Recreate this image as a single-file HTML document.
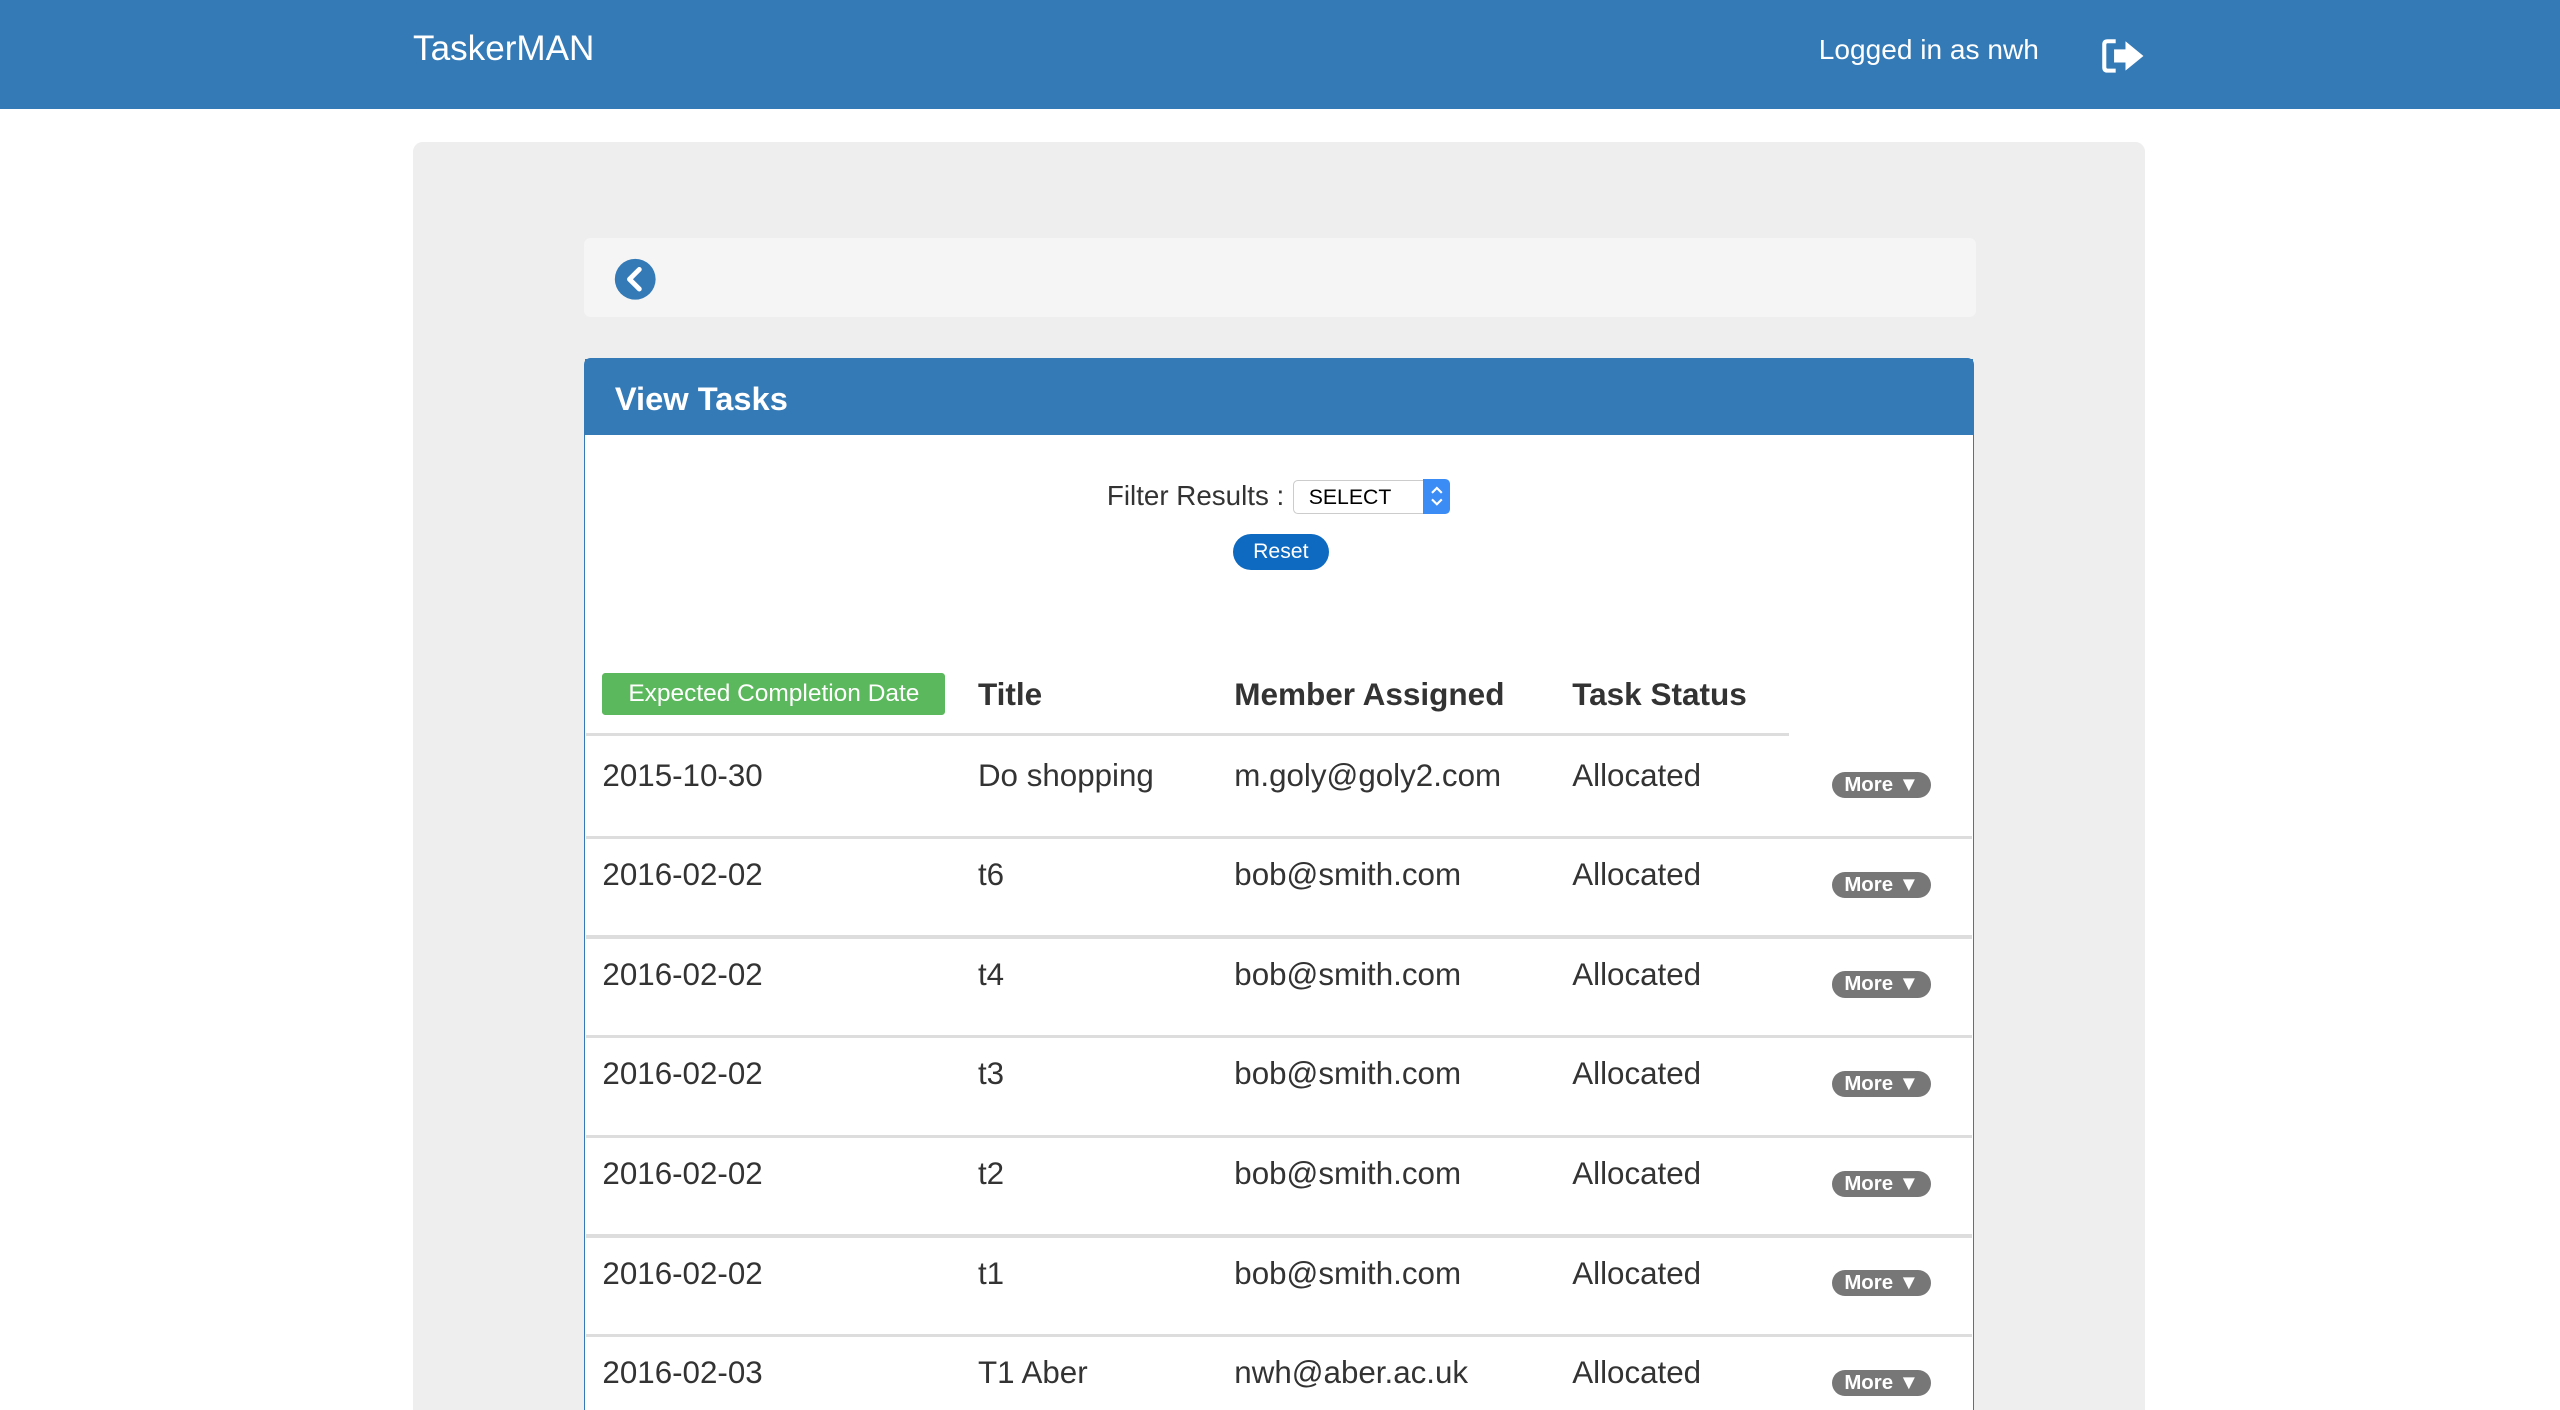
<!DOCTYPE html>
<html><head><meta charset="utf-8">
<style>
html,body{margin:0;padding:0;width:2560px;height:1410px;overflow:hidden;background:#fff}
#z{zoom:1.63265;width:1568px;height:864px;position:relative;overflow:hidden;font-family:"Liberation Sans",Arial,sans-serif;color:#333}
.nav{position:absolute;left:0;top:0;width:1568px;height:67px;background:#337ab7}
.brand{position:absolute;left:253px;top:18px;font-size:21.5px;color:#fff}
.login{position:absolute;left:1114px;top:21px;font-size:17.2px;color:#fff}
.well{position:absolute;left:253px;top:87px;width:1061px;height:777px;background:#eee;border-radius:6px 6px 0 0}
.bc{position:absolute;left:358px;top:146px;width:852px;height:48px;background:#f5f5f5;border-radius:4px}
.panel{position:absolute;left:358px;top:219px;width:850px;height:645px;border:1px solid #337ab7;border-bottom:0;border-radius:4px 4px 0 0;background:#fff}
.ph{position:absolute;left:0;top:0;width:850px;height:47px;background:#337ab7}
.ph span{position:absolute;left:18px;top:13px;font-size:20px;font-weight:bold;color:#fff}
.filter{position:absolute;left:678px;top:294px;font-size:17px}
.sel{position:absolute;left:792px;top:294px;width:96px;height:21px;border:1px solid #ccc;border-radius:3px;background:#fff;box-sizing:border-box}
.sel span{position:absolute;left:9px;top:3px;font-size:13px;color:#000}
.sel i{position:absolute;right:-1px;top:-1px;width:17px;height:21px;background:#3b8cf5;border-radius:0 3px 3px 0}
.reset{position:absolute;left:755px;top:327px;width:59px;height:22px;border-radius:11px;background:#0e6ac0;color:#fff;font-size:13px;text-align:center;line-height:22px}
.lbl{position:absolute;left:369px;top:412px;width:210px;height:26px;background:#5cb85c;border-radius:2px;color:#fff;font-size:15px;text-align:center;line-height:26px}
.th{position:absolute;top:414px;font-size:19.3px;font-weight:bold}
.hline{position:absolute;left:359px;top:449px;width:737px;height:2px;background:#ddd}
.row{position:absolute;left:359px;width:849px;height:61px}
.row .c{position:absolute;top:13px;font-size:19.2px}
.row .sep{position:absolute;left:0;bottom:-2px;width:849px;height:2px;background:#ddd}
.more{position:absolute;left:763px;top:22px;width:61px;height:16px;border-radius:8px;background:#777;color:#fff;font-size:12.5px;font-weight:bold;line-height:16px;text-align:center}
</style></head><body><div id="z">
<div class="nav">
<div class="brand">TaskerMAN</div>
<div class="login">Logged in as nwh</div>
<svg style="position:absolute;left:1287px;top:23px" width="27" height="22" viewBox="0 0 27 22">
<path d="M9 2H4Q2 2 2 4V18Q2 20 4 20H9" fill="none" stroke="#fff" stroke-width="2.5"/>
<path d="M8 7H15V2L26 11L15 20V15H8Z" fill="#fff"/>
</svg>
</div>
<div class="well"></div>
<div class="bc">
<svg style="position:absolute;left:18px;top:12px" width="26" height="26" viewBox="0 0 26 26">
<circle cx="13" cy="13" r="12.5" fill="#337ab7"/>
<path d="M15.5 7L9.5 13L15.5 19" fill="none" stroke="#fff" stroke-width="3" stroke-linecap="round" stroke-linejoin="round"/>
</svg>
</div>
<div class="panel"><div class="ph"><span>View Tasks</span></div></div>
<div class="filter">Filter Results :</div>
<div class="sel"><span>SELECT</span><i><svg width="17" height="21" viewBox="0 0 17 21"><path d="M5.5 8.5L8.5 5.5L11.5 8.5M5.5 12.5L8.5 15.5L11.5 12.5" fill="none" stroke="#fff" stroke-width="1.3"/></svg></i></div>
<div class="reset">Reset</div>
<div class="lbl">Expected Completion Date</div>
<div class="th" style="left:599px">Title</div>
<div class="th" style="left:756px">Member Assigned</div>
<div class="th" style="left:963px">Task Status</div>
<div class="hline"></div>

<div class="row" style="top:451px"><div class="c" style="left:10px">2015-10-30</div><div class="c" style="left:240px">Do shopping</div><div class="c" style="left:397px">m.goly@goly2.com</div><div class="c" style="left:604px">Allocated</div><div class="more">More ▼</div><div class="sep"></div></div>
<div class="row" style="top:512px"><div class="c" style="left:10px">2016-02-02</div><div class="c" style="left:240px">t6</div><div class="c" style="left:397px">bob@smith.com</div><div class="c" style="left:604px">Allocated</div><div class="more">More ▼</div><div class="sep"></div></div>
<div class="row" style="top:573px"><div class="c" style="left:10px">2016-02-02</div><div class="c" style="left:240px">t4</div><div class="c" style="left:397px">bob@smith.com</div><div class="c" style="left:604px">Allocated</div><div class="more">More ▼</div><div class="sep"></div></div>
<div class="row" style="top:634px"><div class="c" style="left:10px">2016-02-02</div><div class="c" style="left:240px">t3</div><div class="c" style="left:397px">bob@smith.com</div><div class="c" style="left:604px">Allocated</div><div class="more">More ▼</div><div class="sep"></div></div>
<div class="row" style="top:695px"><div class="c" style="left:10px">2016-02-02</div><div class="c" style="left:240px">t2</div><div class="c" style="left:397px">bob@smith.com</div><div class="c" style="left:604px">Allocated</div><div class="more">More ▼</div><div class="sep"></div></div>
<div class="row" style="top:756px"><div class="c" style="left:10px">2016-02-02</div><div class="c" style="left:240px">t1</div><div class="c" style="left:397px">bob@smith.com</div><div class="c" style="left:604px">Allocated</div><div class="more">More ▼</div><div class="sep"></div></div>
<div class="row" style="top:817px;height:47px"><div class="c" style="left:10px">2016-02-03</div><div class="c" style="left:240px">T1 Aber</div><div class="c" style="left:397px">nwh@aber.ac.uk</div><div class="c" style="left:604px">Allocated</div><div class="more">More ▼</div></div>
</div></body></html>
